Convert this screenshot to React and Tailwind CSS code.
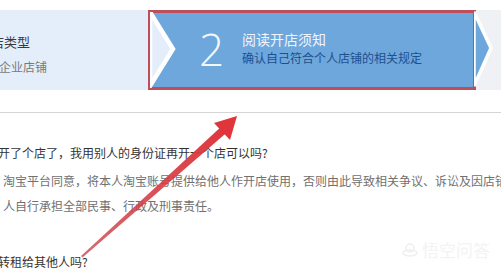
import React from "react";

const CJK = { fontFamily: '"Noto Sans CJK SC", "Noto Sans", sans-serif' };

function RedArrow() {
  return (
    <svg className="pointer-events-none absolute left-0 top-0" width="501" height="268" viewBox="0 0 501 268">
      <defs>
        <linearGradient id="shaft" x1="82" y1="256" x2="230" y2="124" gradientUnits="userSpaceOnUse">
          <stop offset="0" stopColor="#c9464c" stopOpacity="0.8" />
          <stop offset="1" stopColor="#e0353a" />
        </linearGradient>
      </defs>
      <polygon points="81,256 223,125 228,131.5 82.5,257.5" fill="url(#shaft)" />
      <polygon points="237,116 214,123 230,140" fill="#e0353a" />
    </svg>
  );
}

function StepBar() {
  return (
    <div className="mt-[10px] flex h-[80px]">
      <div className="w-[148px] shrink-0 overflow-hidden bg-[#e4eefa] pt-[22px]">
        <p className="-ml-[22px] whitespace-nowrap text-[13px] text-[#3a3a3a]" style={CJK}>选店类型</p>
        <p className="-ml-[13px] mt-[6px] whitespace-nowrap text-[12px] text-[#7a7a7a]" style={CJK}>、企业店铺</p>
      </div>
      <div className="relative flex w-[328px] shrink-0 items-center border-[3px] border-[#be4f5a] bg-[#6ea7dc]">
        <svg className="absolute -left-[1px] -top-[1px]" width="32" height="76" viewBox="0 0 32 76">
          <polygon points="0,0 23,37 0,74" fill="#e4eefa" stroke="#ffffff" strokeWidth="4.5" />
        </svg>
        <span className="-mt-[2px] ml-[48px] w-[30px] text-[44px] font-light leading-none text-[#f2f7fd]" style={{ fontFamily: '"Open Sans", "Liberation Sans", sans-serif' }}>2</span>
        <div className="-mt-[5px] ml-[13px]" style={CJK}>
          <p className="text-[14px] leading-[18px] text-[#eef5fd]">阅读开店须知</p>
          <p className="mt-[2px] text-[12px] leading-[16px] text-[#1e4f8e]">确认自己符合个人店铺的相关规定</p>
        </div>
      </div>
      <div className="relative flex-1 bg-[#eff1f4]">
        <svg className="absolute -left-[2px] top-0" width="24" height="80" viewBox="0 0 24 80">
          <polygon points="0,2 17,38 0,76" fill="#6ea7dc" stroke="#ffffff" strokeWidth="3.5" />
        </svg>
      </div>
    </div>
  );
}

export default function App() {
  return (
    <div className="relative h-[268px] w-[501px] overflow-hidden bg-white" style={CJK}>
      <StepBar />
      <div className="mt-[22px] border-b border-[#d4d4d4]" />
      <div className="pt-[30px]">
        <p className="-ml-[2px] whitespace-nowrap text-[12px] leading-[20px] text-[#333]">
          开了个店了，我用别人的身份证再开一个店可以吗?
        </p>
        <div className="ml-[3px] mt-[5px] text-[12px] leading-[25px] text-[#707070]">
          <p className="whitespace-nowrap">淘宝平台同意，将本人淘宝账号提供给他人作开店使用，否则由此导致相关争议、诉讼及因店铺经营产生的一切后果由本</p>
          <p className="whitespace-nowrap">人自行承担全部民事、行政及刑事责任。</p>
        </div>
        <p className="-ml-[2px] mt-[34px] whitespace-nowrap text-[12px] leading-[20px] text-[#333]">
          转租给其他人吗?
        </p>
      </div>
      <RedArrow />
      <div className="pointer-events-none absolute left-[402px] top-[241px] flex items-center gap-[4px] text-[#f3f3f3]">
        <svg width="16" height="14" viewBox="0 0 16 14">
          <circle cx="8" cy="5" r="4" fill="none" stroke="#efefef" strokeWidth="1.5" />
          <ellipse cx="8" cy="10" rx="7" ry="3" fill="none" stroke="#efefef" strokeWidth="1.5" />
        </svg>
        <span className="text-[17px] leading-none">悟空问答</span>
      </div>
    </div>
  );
}
